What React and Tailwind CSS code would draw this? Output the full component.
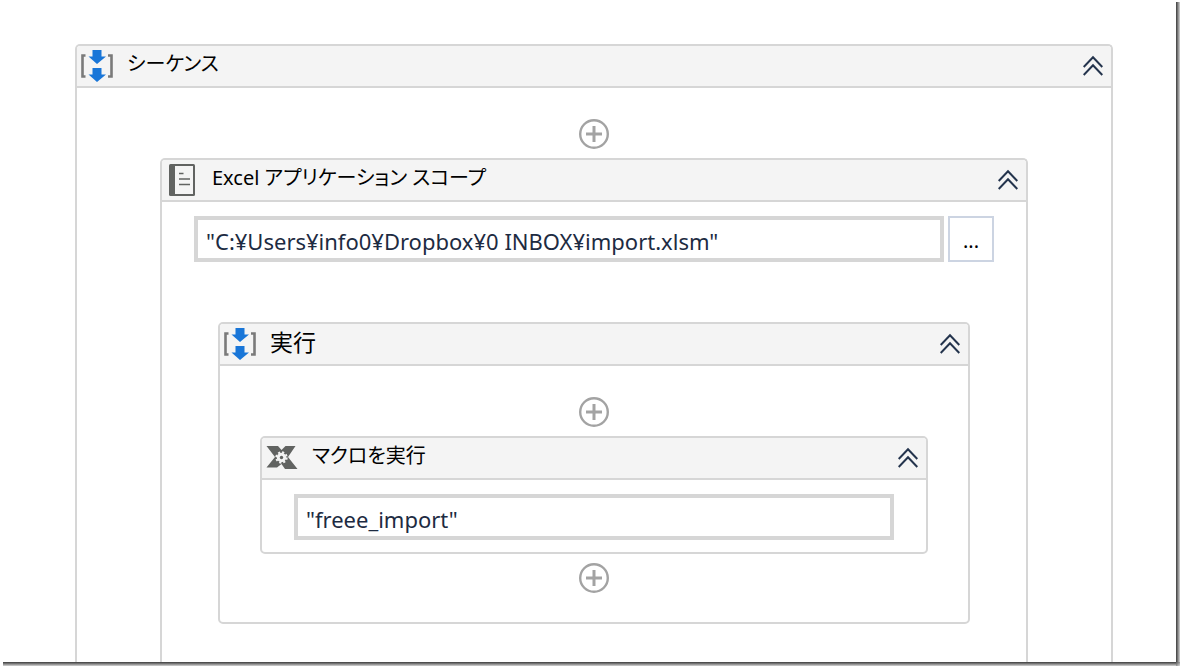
import { clsx } from "clsx";

function SequenceIcon() {
  return (
    <svg viewBox="0 0 34 34" className="h-[34px] w-[34px]" aria-hidden="true">
      <path d="M4.5 6.500H1.500V27.500H4.500M27 6.500h3.500V27.500H27" fill="none" stroke="#7a7a7a" strokeWidth="2.600" />
      <path
        d="M11.500 1h9v6.500h4.500L16 15 7.500 7.500h4zM11.500 19h9v6.500h4.500L16 33 7.500 25.500h4z"
        fill="#1976d8"
      />
    </svg>
  );
}

function NotebookIcon() {
  return (
    <svg viewBox="0 0 34 34" className="h-[34px] w-[34px]" aria-hidden="true">
      <rect x="3" y="1" width="26" height="32" rx="1.500" fill="#616361" />
      <path d="M9 3h18v28H9z" fill="#f4f4f4" />
      <path d="M13 10.500h4.500M13 16h11M13 21.500h11" stroke="#616361" strokeWidth="1.600" />
    </svg>
  );
}

function MacroIcon() {
  return (
    <svg viewBox="0 0 34 34" className="h-[34px] w-[34px]" aria-hidden="true">
      <path d="M0.500 5H12L15.500 9 19.500 5H29.500L22 16 31.500 28H19L15.500 23 11 26.500H0.500L9 16z" fill="#616361" />
      <circle cx="15.500" cy="16.500" r="4.700" fill="#f4f4f4" />
      <circle
        cx="15.500"
        cy="16.500"
        r="5.200"
        fill="none"
        stroke="#f4f4f4"
        strokeWidth="2"
        strokeDasharray="2.100 1.984"
      />
      <circle cx="15.500" cy="16.500" r="1.700" fill="#616361" />
    </svg>
  );
}

function CollapseButton({ label }) {
  return (
    <button type="button" aria-label={`${label} を折りたたむ`} className="ml-auto shrink-0">
      <svg viewBox="0 0 20 22" className="h-[22px] w-5" fill="none" stroke="#24344d" strokeWidth="2">
        <path d="M0.700 12 10 2.200 19.300 12M0.700 20 10 10.200 19.300 20" />
      </svg>
    </button>
  );
}

function AddButton() {
  return (
    <button type="button" aria-label="アクティビティを追加" className="mx-auto block shrink-0">
      <svg viewBox="0 0 30 30" className="size-[30px]" fill="none" stroke="#a3a3a3">
        <circle cx="15" cy="15" r="13.800" strokeWidth="2.400" />
        <path d="M15 7v16M7 15h16" strokeWidth="3" />
      </svg>
    </button>
  );
}

function Activity({ title, titleSize = "text-xl", icon, open, className, children }) {
  return (
    <section
      className={clsx(
        "flex flex-col border-2 border-[#d6d6d6] bg-white",
        open ? "flex-1 rounded-t-[5px] border-b-0" : "rounded-[5px]",
        className
      )}
    >
      <header className="flex h-[42px] shrink-0 items-center gap-3 rounded-t-[3px] border-b-2 border-[#d6d6d6] bg-[#f4f4f4] pr-2 pl-1">
        {icon}
        <h2
          className={clsx("pb-1 leading-8 whitespace-nowrap text-black [font-feature-settings:'palt']", titleSize)}
        >
          {title}
        </h2>
        <CollapseButton label={title} />
      </header>
      {children}
    </section>
  );
}

function ExpressionInput({ label, value }) {
  return (
    <input
      type="text"
      aria-label={label}
      defaultValue={value}
      className="h-[46px] min-w-0 flex-1 border-4 border-[#d6d6d6] bg-white px-2 pt-1 text-[22px] text-[#1d2b42] outline-none"
    />
  );
}

export default function App() {
  return (
    <div className="grid h-screen grid-cols-[minmax(0,1fr)_4px] grid-rows-[minmax(0,1fr)_4px] overflow-hidden bg-white font-['Noto_Sans','Noto_Sans_CJK_JP',sans-serif]">
      <main className="flex flex-col overflow-hidden pt-11 pr-[63px] pl-[75px]">
        <Activity title="シーケンス" icon={<SequenceIcon />} open>
          <div className="flex flex-1 flex-col px-[83px] pt-[31px]">
            <AddButton />
            <Activity title="Excel アプリケーション スコープ" icon={<NotebookIcon />} open className="mt-[9px]">
              <div className="flex gap-1 px-8 pt-[14px]">
                <ExpressionInput label="ブックのパス" value={'"C:¥Users¥info0¥Dropbox¥0 INBOX¥import.xlsm"'} />
                <button type="button" className="size-[46px] border-2 border-[#ccd4e2] bg-white pt-1 text-xl text-black">
                  ...
                </button>
              </div>
              <div className="px-14 pt-[60px]">
                <Activity title="実行" titleSize="text-[23px]" icon={<SequenceIcon />}>
                  <div className="px-10 pt-[31px] pb-[29px]">
                    <AddButton />
                    <Activity title="マクロを実行" icon={<MacroIcon />} className="my-[9px]">
                      <div className="flex px-8 pt-[14px] pb-3">
                        <ExpressionInput label="マクロ名" value={'"freee_import"'} />
                      </div>
                    </Activity>
                    <AddButton />
                  </div>
                </Activity>
              </div>
            </Activity>
          </div>
        </Activity>
      </main>
      <div className="mt-[2px] bg-linear-to-r from-[#3c3c3c] via-[#858585] to-[#d5d5d5]" />
      <div className="ml-[3px] bg-linear-to-b from-[#3c3c3c] via-[#858585] to-[#d5d5d5]" />
      <div className="bg-linear-to-br from-[#555555] to-[#dddddd]" />
    </div>
  );
}
